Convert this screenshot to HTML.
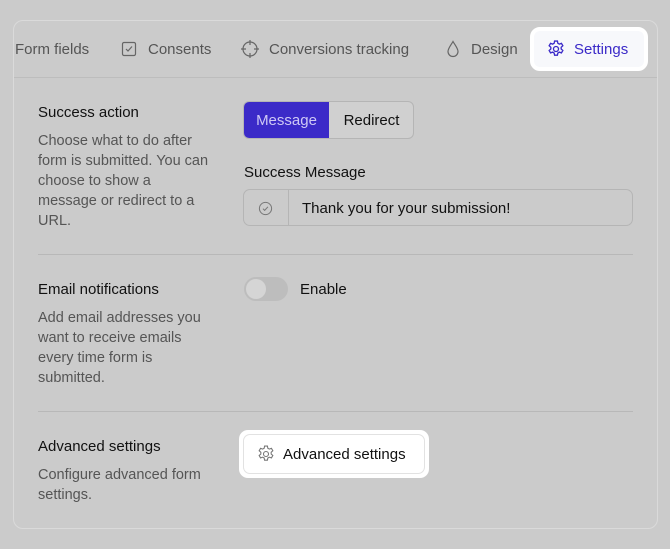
<!DOCTYPE html>
<html><head><style>
*{box-sizing:border-box;margin:0;padding:0}
body{width:670px;height:549px;background:#cbcbcb;font-family:"Liberation Sans",sans-serif;position:relative;overflow:hidden;color:#1a1a1a}
.a{position:absolute}
.card{left:13px;top:20px;width:645px;height:509px;border:1px solid #dadada;border-radius:10px;background:#cbcbcb}
.tab{top:41px;font-size:15px;color:#555;white-space:nowrap}
.h{font-size:15px;color:#111;white-space:nowrap}
.p{font-size:14.5px;color:#555;line-height:20px;white-space:nowrap}
.line{height:1px;background:#b8b8b8}
</style></head><body>
<div class="a card"></div>
<div class="a line" style="left:14px;top:77px;width:643px;background:#bdbdbd"></div>
<div class="a tab" style="left:15px">Form fields</div>
<svg class="a" style="left:121px;top:41px" width="16" height="16" viewBox="0 0 16 16"><rect x="1.5" y="1.5" width="13" height="13" rx="1.5" fill="none" stroke="#666" stroke-width="1.2"/><path d="M5 8l2 2 4-4.5" fill="none" stroke="#666" stroke-width="1.2"/></svg>
<div class="a tab" style="left:148px">Consents</div>
<svg class="a" style="left:240px;top:39px" width="20" height="20" viewBox="0 0 20 20" fill="none" stroke="#666" stroke-width="1.2"><circle cx="10" cy="10" r="7"/><path d="M10 1v5M10 14v5M1 10h5M14 10h5"/></svg>
<div class="a tab" style="left:269px">Conversions tracking</div>
<svg class="a" style="left:446px;top:40px" width="14" height="18" viewBox="0 0 14 18" fill="none" stroke="#666" stroke-width="1.2"><path d="M7 1.5C5 5 2 8.5 2 11.5a5 5 0 0 0 10 0C12 8.5 9 5 7 1.5z"/></svg>
<div class="a tab" style="left:471px">Design</div>
<div class="a" style="left:530px;top:27px;width:118px;height:44px;background:#f7f8fb;border:4px solid #fff;border-radius:10px"></div>
<svg class="a" style="left:546px;top:39px" width="20" height="20" viewBox="0 0 24 24" fill="none" stroke="#3b2ac8" stroke-width="1.6"><path d="M10.3 2.5h3.4l.5 2.6 1.8 1 2.5-.9 1.7 2.9-2 1.8v2.1l2 1.8-1.7 2.9-2.5-.9-1.8 1-.5 2.6h-3.4l-.5-2.6-1.8-1-2.5.9-1.7-2.9 2-1.8v-2.1l-2-1.8 1.7-2.9 2.5.9 1.8-1z"/><circle cx="12" cy="12" r="3"/></svg>
<div class="a tab" style="left:574px;color:#3b2ac8">Settings</div>

<div class="a h" style="left:38px;top:104px">Success action</div>
<div class="a p" style="left:38px;top:131px">Choose what to do after<br>form is submitted. You can<br>choose to show a<br>message or redirect to a<br>URL.</div>
<div class="a" style="left:243px;top:101px;width:171px;height:38px;border:1px solid #b5b5b5;border-radius:6px;overflow:hidden;background:#d0d0d0">
<div class="a" style="left:0;top:0;width:85px;height:36px;background:#3b2ac8;color:#cfc9f5;font-size:15px;line-height:38px;text-align:center">Message</div>
<div class="a" style="left:85px;top:0;width:85px;height:36px;font-size:15px;line-height:38px;text-align:center;color:#111">Redirect</div></div>
<div class="a h" style="left:244px;top:164px">Success Message</div>
<div class="a" style="left:243px;top:189px;width:390px;height:37px;border:1px solid #b5b5b5;border-radius:7px">
<div class="a" style="left:44px;top:0;width:1px;height:35px;background:#b5b5b5"></div>
<svg class="a" style="left:14px;top:11px" width="15" height="15" viewBox="0 0 16 16" fill="none" stroke="#777" stroke-width="1.1"><circle cx="8" cy="8" r="6.5"/><path d="M5.3 8.2l1.8 1.8 3.5-3.8"/></svg>
<div class="a" style="left:58px;top:10px;font-size:15px;color:#111">Thank you for your submission!</div></div>
<div class="a line" style="left:38px;top:254px;width:595px"></div>

<div class="a h" style="left:38px;top:281px">Email notifications</div>
<div class="a p" style="left:38px;top:308px">Add email addresses you<br>want to receive emails<br>every time form is<br>submitted.</div>
<div class="a" style="left:244px;top:277px;width:44px;height:24px;background:#bdbdbd;border-radius:12px"><div class="a" style="left:2px;top:2px;width:20px;height:20px;border-radius:50%;background:#d5d5d5"></div></div>
<div class="a h" style="left:300px;top:281px">Enable</div>
<div class="a line" style="left:38px;top:411px;width:595px"></div>

<div class="a h" style="left:38px;top:438px">Advanced settings</div>
<div class="a p" style="left:38px;top:465px">Configure advanced form<br>settings.</div>
<div class="a" style="left:239px;top:430px;width:190px;height:48px;background:#fff;border-radius:9px"></div>
<div class="a" style="left:243px;top:434px;width:182px;height:40px;border:1px solid #e2e2e2;border-radius:7px"></div>
<svg class="a" style="left:256px;top:444px" width="20" height="20" viewBox="0 0 24 24" fill="none" stroke="#777" stroke-width="1.3"><path d="M10.3 2.5h3.4l.5 2.6 1.8 1 2.5-.9 1.7 2.9-2 1.8v2.1l2 1.8-1.7 2.9-2.5-.9-1.8 1-.5 2.6h-3.4l-.5-2.6-1.8-1-2.5.9-1.7-2.9 2-1.8v-2.1l-2-1.8 1.7-2.9 2.5.9 1.8-1z"/><circle cx="12" cy="12" r="3"/></svg>
<div class="a h" style="left:283px;top:446px">Advanced settings</div>
</body></html>
